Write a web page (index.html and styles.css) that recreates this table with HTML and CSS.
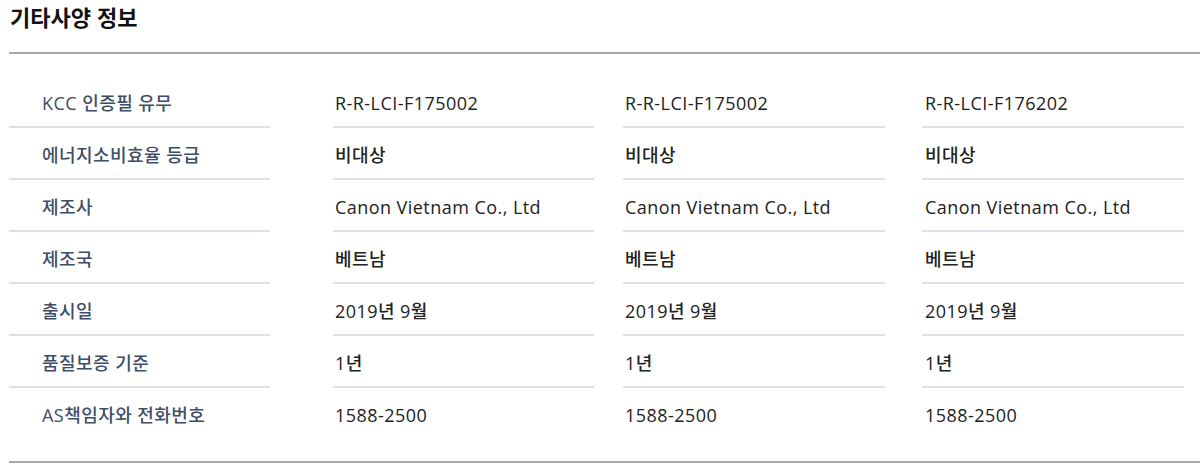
FILE: index.html
```html
<!DOCTYPE html>
<html lang="ko">
<head>
<meta charset="utf-8">
<title>기타사양 정보</title>
<link rel="stylesheet" href="styles.css">
</head>
<body>
<section class="spec">
  <h2 class="spec-title">기타사양 정보</h2>
  <div class="spec-body">
    <div class="spec-row">
      <div class="cell label">KCC 인증필 유무</div>
      <div class="cell v1">R-R-LCI-F175002</div>
      <div class="cell v2">R-R-LCI-F175002</div>
      <div class="cell v3">R-R-LCI-F176202</div>
    </div>
    <div class="spec-row">
      <div class="cell label">에너지소비효율 등급</div>
      <div class="cell v1">비대상</div>
      <div class="cell v2">비대상</div>
      <div class="cell v3">비대상</div>
    </div>
    <div class="spec-row">
      <div class="cell label">제조사</div>
      <div class="cell v1">Canon Vietnam Co., Ltd</div>
      <div class="cell v2">Canon Vietnam Co., Ltd</div>
      <div class="cell v3">Canon Vietnam Co., Ltd</div>
    </div>
    <div class="spec-row">
      <div class="cell label">제조국</div>
      <div class="cell v1">베트남</div>
      <div class="cell v2">베트남</div>
      <div class="cell v3">베트남</div>
    </div>
    <div class="spec-row">
      <div class="cell label">출시일</div>
      <div class="cell v1">2019년 9월</div>
      <div class="cell v2">2019년 9월</div>
      <div class="cell v3">2019년 9월</div>
    </div>
    <div class="spec-row">
      <div class="cell label">품질보증 기준</div>
      <div class="cell v1">1년</div>
      <div class="cell v2">1년</div>
      <div class="cell v3">1년</div>
    </div>
    <div class="spec-row last">
      <div class="cell label">AS책임자와 전화번호</div>
      <div class="cell v1">1588-2500</div>
      <div class="cell v2">1588-2500</div>
      <div class="cell v3">1588-2500</div>
    </div>
  </div>
</section>
</body>
</html>
```
FILE: styles.css
```css
html, body {
  margin: 0;
  padding: 0;
  background: #ffffff;
}

body {
  font-family: "Open Sans", "Noto Sans CJK KR", sans-serif;
  color: #222222;
}

.spec {
  padding-left: 9px;
}

.spec-title {
  margin: 0;
  padding: 1px 0 0 1px;
  height: 52px;
  box-sizing: border-box;
  font-family: "Noto Sans CJK KR", sans-serif;
  font-size: 22px;
  line-height: 30px;
  font-weight: 700;
  color: #111111;
}

.spec-body {
  border-top: 2px solid #a8a8a8;
  border-bottom: 2px solid #a8a8a8;
  padding: 22px 0 23px;
}

.spec-row {
  display: flex;
}

.cell {
  box-sizing: border-box;
  height: 52px;
  padding-top: 14px;
  line-height: 26px;
  font-size: 18px;
  font-weight: 500;
  letter-spacing: 0.45px;
  border-bottom: 2px solid #dde1e7;
  white-space: nowrap;
}

.spec-row.last .cell {
  border-bottom: none;
  height: 50px;
}

.label {
  width: 261px;
  padding-left: 33px;
  color: #3e4e66;
}

.v1 {
  width: 261px;
  margin-left: 63px;
  padding-left: 2px;
}

.v2 {
  width: 262px;
  margin-left: 29px;
  padding-left: 2px;
}

.v3 {
  width: 262px;
  margin-left: 37px;
  padding-left: 3px;
}
```
